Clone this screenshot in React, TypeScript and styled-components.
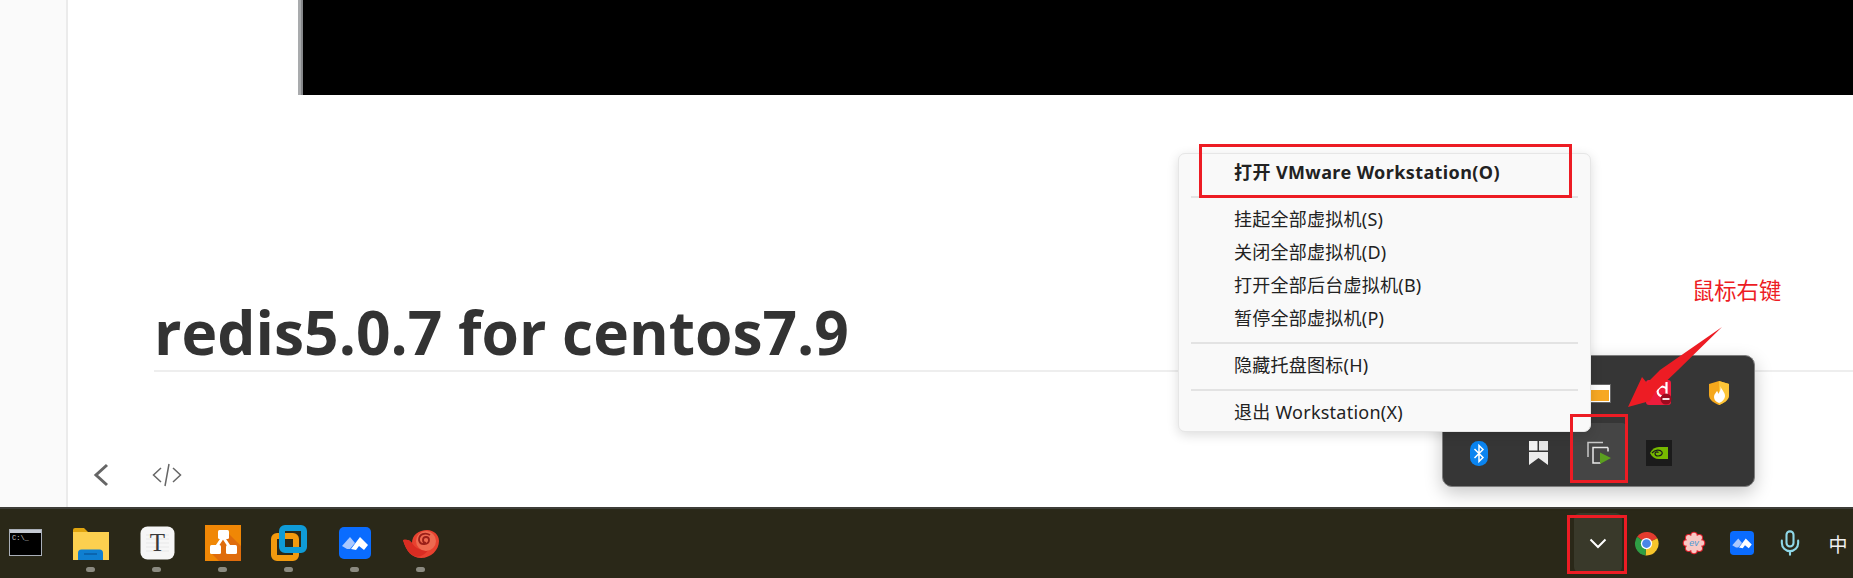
import React from "react";
import styled, { createGlobalStyle } from "styled-components";
import { Mic } from "lucide-react";

const GlobalStyle = createGlobalStyle`
  html, body {
    margin: 0;
    padding: 0;
    background: #fff;
    overflow: hidden;
  }
  * {
    box-sizing: border-box;
  }
`;

const Page = styled.div`
  position: relative;
  width: 1853px;
  height: 578px;
  overflow: hidden;
  display: flex;
  flex-direction: column;
  font-family: "Noto Sans", "Noto Sans CJK SC", sans-serif;
`;

const Workspace = styled.div`
  flex: 1;
  display: flex;
  min-height: 0;
`;

const Sidebar = styled.div`
  width: 68px;
  background: #fafafa;
  border-right: 2px solid #ebebeb;
`;

const Content = styled.div`
  flex: 1;
  min-width: 0;
  background: #fff;
`;

const ImageBand = styled.div`
  height: 95px;
  margin-left: 230px;
  background: #000;
  border-left: 3px solid #a9abad;
  box-shadow: inset 2px 0 0 #85878a;
`;

const TitleBlock = styled.div`
  margin: 191px 0 0 86px;
  border-bottom: 2px solid #eeeeee;
`;

const Title = styled.h1`
  margin: 0;
  height: 84px;
  font-family: "Open Sans", sans-serif;
  font-size: 60.5px;
  line-height: 91px;
  font-weight: 700;
  color: #333;
`;

const EditorTools = styled.div`
  display: flex;
  align-items: center;
  gap: 42px;
  margin: 90px 0 0 24px;
  color: #666;
`;

const Taskbar = styled.div`
  height: 71px;
  flex: none;
  display: flex;
  justify-content: space-between;
  background: #2a2818;
  border-top: 2px solid #3e3d38;
`;

const AppGroup = styled.div`
  display: flex;
  margin-left: -8px;
`;

const AppSlot = styled.div<{ $top: number }>`
  position: relative;
  width: 66px;
  height: 69px;
  display: flex;
  justify-content: center;
  padding-top: ${(p) => p.$top}px;
`;

const RunDot = styled.span`
  position: absolute;
  left: 28px;
  top: 58px;
  width: 9px;
  height: 5px;
  border-radius: 3px;
  background: #8b8a80;
`;

const TrayGroup = styled.div`
  display: flex;
  margin-right: -9px;
  padding-top: 4px;
`;

const TraySlot = styled.div<{ $active?: boolean }>`
  width: 48px;
  height: 60px;
  display: flex;
  align-items: center;
  justify-content: center;
  border-radius: 6px;
  color: #fff;
  background: ${(p) => (p.$active ? "#39392a" : "transparent")};
`;

const ImeLabel = styled.span`
  font-family: "Noto Sans CJK SC", sans-serif;
  font-size: 19px;
  color: #f0f0f0;
`;

const Flyout = styled.div`
  position: absolute;
  left: 1442px;
  top: 355px;
  width: 313px;
  height: 132px;
  padding: 7px 0 0 6px;
  display: grid;
  grid-template-columns: repeat(5, 60px);
  grid-auto-rows: 60px;
  background: #363636;
  border: 1px solid #7d7d7d;
  border-radius: 10px;
  box-shadow: 0 6px 18px rgba(0, 0, 0, 0.22);
`;

const FlyoutCell = styled.div<{ $active?: boolean }>`
  display: flex;
  align-items: center;
  justify-content: center;
  margin: 0 3px;
  border-radius: 4px;
  background: ${(p) => (p.$active ? "#454545" : "transparent")};
`;

const Menu = styled.div`
  position: absolute;
  left: 1178px;
  top: 153px;
  width: 413px;
  height: 279px;
  padding: 2px 12px 0;
  background: #f9f9f9;
  border: 1px solid #e6e6e6;
  border-radius: 7px;
  box-shadow: 0 3px 12px rgba(0, 0, 0, 0.14);
`;

const MenuItem = styled.div<{ $bold?: boolean }>`
  height: 33px;
  padding-left: 43px;
  font-size: 18px;
  line-height: 33px;
  white-space: nowrap;
  color: #222;
  letter-spacing: ${(p) => (p.$bold ? "0.4px" : "0.25px")};
  font-weight: ${(p) => (p.$bold ? 700 : 400)};
`;

const MenuRule = styled.div`
  height: 2px;
  margin: 7px 0 5px;
  background: #e3e3e3;
`;

const RedBox = styled.div<{
  $left: number;
  $top: number;
  $width: number;
  $height: number;
}>`
  position: absolute;
  left: ${(p) => p.$left}px;
  top: ${(p) => p.$top}px;
  width: ${(p) => p.$width}px;
  height: ${(p) => p.$height}px;
  border: 3px solid #ed1c24;
`;

const Note = styled.div`
  position: absolute;
  left: 1692px;
  top: 273px;
  font-family: "Noto Sans CJK SC", sans-serif;
  font-size: 22.3px;
  line-height: 32px;
  color: #ed1c24;
`;

const ArrowMark = styled.svg`
  position: absolute;
  left: 1620px;
  top: 320px;
`;

const CmdIcon = () => (
  <svg width="33" height="27" viewBox="0 0 33 27">
    <rect x="0.5" y="0.5" width="32" height="26" fill="#000" stroke="#a9afb8" />
    <rect x="1" y="1" width="31" height="3" fill="#c5cad2" />
    <text x="3" y="11" fontFamily="Liberation Mono" fontSize="7" fill="#c8c8c8">
      C:\_
    </text>
  </svg>
);

const FolderIcon = () => (
  <svg width="36" height="33" viewBox="0 0 36 33">
    <path d="M0 3a2 2 0 0 1 2-2h9l4 4H0z" fill="#e0a50f" />
    <path d="M0 5h36v28H0z" fill="#fcd04f" />
    <path d="M5 33v-7a3.500 3.500 0 0 1 3.500-3.500h18a3.500 3.500 0 0 1 3.500 3.500v7z" fill="#0f7fd1" />
    <path d="M11 27h13" stroke="#0a5da3" strokeWidth="1.500" />
  </svg>
);

const TyporaIcon = () => (
  <svg width="35" height="34" viewBox="0 0 35 34">
    <rect x="0.5" y="0.5" width="34" height="33" rx="7" fill="#f6f6f6" />
    <path d="M6 9h23M6 13h23M6 17h23M6 21h23M6 25h23" stroke="#e8e8e8" />
    <text
      x="17.5"
      y="25"
      textAnchor="middle"
      fontFamily="Liberation Serif"
      fontSize="25"
      fill="#3a3a3a"
    >
      T
    </text>
  </svg>
);

const DrawioIcon = () => (
  <svg width="36" height="36" viewBox="0 0 36 36">
    <rect width="36" height="36" fill="#f08705" />
    <path d="M23 8l13 13v15H14L5 27z" fill="#df6c0c" />
    <path d="M18 12l-8 12M18 12l8 12" stroke="#fff" strokeWidth="3" />
    <rect x="13" y="5" width="11" height="9" rx="1.5" fill="#fff" />
    <rect x="5" y="20" width="11" height="9" rx="1.5" fill="#fff" />
    <rect x="21" y="20" width="11" height="9" rx="1.5" fill="#fff" />
  </svg>
);

const VmwareIcon = () => (
  <svg width="36" height="36" viewBox="0 0 36 36">
    <rect x="3" y="11" width="22" height="22" rx="3" fill="none" stroke="#f29a0e" strokeWidth="6" />
    <rect x="11" y="3" width="22" height="22" rx="3" fill="none" stroke="#0f9bd7" strokeWidth="6" />
  </svg>
);

const MeetingIcon = ({ size }: { size: number }) => (
  <svg width={size} height={size} viewBox="0 0 32 32">
    <rect width="32" height="32" rx="5" fill="#0a6cff" />
    <path d="M3 19l8-9 5 6-5 6H8z" fill="#a9c8ff" />
    <path d="M12 22l9-12 8 8-4 5-5-4-3 4z" fill="#fff" />
  </svg>
);

const SnailIcon = () => (
  <svg width="36" height="28" viewBox="0 0 36 28">
    <path d="M0 10c4-1 7 0 9 3 0-8 7-13 15-13 7 0 12 5 12 11 0 9-8 17-18 17C9 28 3 21 0 10z" fill="#e8412f" />
    <path d="M0 10c4-1 7 0 9 3 3 5 9 8 16 7-3 5-9 8-14 6C6 24 3 19 0 10z" fill="#d92c22" />
    <circle cx="23" cy="11" r="10" fill="#ee6a50" />
    <path d="M23 13a3 3 0 1 1 3-3c0 5-9 6-10 0 0-6 6-8 11-5" fill="none" stroke="#9a1f18" strokeWidth="1.800" />
  </svg>
);

const ChevronIcon = () => (
  <svg width="18" height="11" viewBox="0 0 18 11">
    <path d="M1.5 1.5L9 9l7.5-7.5" fill="none" stroke="#fff" strokeWidth="2" />
  </svg>
);

const ChromeIcon = () => (
  <svg width="25" height="25" viewBox="0 0 24 24">
    <path d="M12 12L3 5.5A11.5 11.5 0 0 1 22.4 7z" fill="#e33b2e" />
    <path d="M12 12l10.4-5A11.5 11.5 0 0 1 11 23.5z" fill="#f7c52b" />
    <path d="M12 12l-1 11.5A11.5 11.5 0 0 1 3 5.5z" fill="#2f9e44" />
    <circle cx="12" cy="12" r="5.4" fill="#fff" />
    <circle cx="12" cy="12" r="4.2" fill="#4a86e8" />
  </svg>
);

const petals = [0, 45, 90, 135, 180, 225, 270, 315].map((deg) => ({
  x: 12 + 7.5 * Math.cos((deg * Math.PI) / 180),
  y: 12 + 7.5 * Math.sin((deg * Math.PI) / 180),
}));

const FlowerIcon = () => (
  <svg width="24" height="24" viewBox="0 0 24 24">
    {petals.map((p, i) => (
      <circle key={i} cx={p.x} cy={p.y} r="3.800" fill="#e0232e" />
    ))}
    {petals.map((p, i) => (
      <circle key={i} cx={p.x} cy={p.y} r="2.700" fill="#f9c8c4" />
    ))}
    <circle cx="12" cy="12" r="7.500" fill="#f9c8c4" />
    <text x="12" y="15" textAnchor="middle" fontFamily="Liberation Sans" fontStyle="italic" fontSize="9" fill="#4a9ad4">
      ev
    </text>
  </svg>
);

const BluetoothIcon = () => (
  <svg width="18" height="25" viewBox="0 0 18 25">
    <rect width="18" height="25" rx="8.500" fill="#0a84f0" />
    <path d="M4.500 8l8.500 8.500L9 20.500V4.500l4 4L4.500 17" fill="none" stroke="#fff" strokeWidth="1.500" />
  </svg>
);

const RibbonIcon = () => (
  <svg width="20" height="24" viewBox="0 0 20 24">
    <rect width="8.500" height="9.500" fill="#f2f2f2" />
    <rect x="10" width="9" height="9.500" fill="#e6e6e6" />
    <path d="M0 11h19v13l-9.500-7L0 24z" fill="#ececec" />
  </svg>
);

const VmTrayIcon = () => (
  <svg width="24" height="24" viewBox="0 0 24 24">
    <path d="M1 16V1.500h15" fill="none" stroke="#c8c8c8" strokeWidth="1.500" />
    <path d="M15 6.500H6V22h8" fill="none" stroke="#e8e8e8" strokeWidth="1.500" />
    <path d="M21 6.500h-6M21 6.500v4" fill="none" stroke="#e8e8e8" strokeWidth="1.500" />
    <path d="M13 11.500L24 17l-11 6z" fill="#5b9f1f" />
  </svg>
);

const NvidiaIcon = () => (
  <svg width="26" height="26" viewBox="0 0 26 26">
    <rect width="26" height="26" fill="#1b1b1b" />
    <path d="M13 7h9v12h-9c-4 0-7-2-9-6 2-4 5-6 9-6z" fill="#76b900" />
    <path d="M6 13c3-3.500 8-4 10-1 1 2-1 4-4 4-2 0-3-1-3-2.500s2-2 3.500-1" fill="none" stroke="#1b1b1b" strokeWidth="1.200" />
  </svg>
);

const WindowTrayIcon = () => (
  <svg width="24" height="19" viewBox="0 0 24 19">
    <rect x="0.500" y="0.500" width="23" height="18" fill="#fff" stroke="#666" />
    <rect x="2" y="6" width="20" height="11" fill="#f7a823" />
  </svg>
);

const RedAppIcon = () => (
  <svg width="26" height="26" viewBox="0 0 26 26">
    <rect width="25" height="25" rx="3" fill="#ee1c3c" />
    <path d="M20.500 2v12M20.500 9a4.800 4.800 0 1 0 0 5" fill="none" stroke="#fff" strokeWidth="2.200" />
    <circle cx="20" cy="19" r="5.500" fill="#9c0b1f" />
    <path d="M16.500 19h7" stroke="#fff" strokeWidth="1.800" />
  </svg>
);

const ShieldIcon = () => (
  <svg width="20" height="24" viewBox="0 0 20 24">
    <path d="M10 0l10 3v11c0 5-5 8-10 10C5 22 0 19 0 14V3z" fill="#f5a81c" />
    <path d="M10 0l10 3v11c0 5-5 8-10 10z" fill="#fdc538" />
    <path d="M11.500 5c1 4 4.500 6 4.500 10 0 3-3 6-6 7-3-1-5-3-5-6 0-3 2-4 3-6 1 1 1 2 1 3 2-2 3-5 2.500-8z" fill="#fff" />
  </svg>
);

const apps = [
  { icon: <CmdIcon />, top: 20, running: false },
  { icon: <FolderIcon />, top: 18, running: true },
  { icon: <TyporaIcon />, top: 17, running: true },
  { icon: <DrawioIcon />, top: 16, running: true },
  { icon: <VmwareIcon />, top: 16, running: true },
  { icon: <MeetingIcon size={32} />, top: 18, running: true },
  { icon: <SnailIcon />, top: 21, running: true },
];

const menuGroups = [
  ["挂起全部虚拟机(S)", "关闭全部虚拟机(D)", "打开全部后台虚拟机(B)", "暂停全部虚拟机(P)"],
  ["隐藏托盘图标(H)"],
  ["退出 Workstation(X)"],
];

export default function App() {
  return (
    <Page>
      <GlobalStyle />
      <Workspace>
        <Sidebar />
        <Content>
          <ImageBand />
          <TitleBlock>
            <Title>redis5.0.7 for centos7.9</Title>
          </TitleBlock>
          <EditorTools>
            <svg width="18" height="26" viewBox="0 0 18 26">
              <path d="M15 3L4 13l11 10" fill="none" stroke="#666" strokeWidth="3" />
            </svg>
            <svg width="30" height="24" viewBox="0 0 30 24">
              <path
                d="M9 5L1.500 12 9 19M21 5l7.500 7L21 19M17 1l-4 22"
                fill="none"
                stroke="#666"
                strokeWidth="1.500"
              />
            </svg>
          </EditorTools>
        </Content>
      </Workspace>

      <Taskbar>
        <AppGroup>
          {apps.map((app, index) => (
            <AppSlot key={index} $top={app.top}>
              {app.icon}
              {app.running && <RunDot />}
            </AppSlot>
          ))}
        </AppGroup>
        <TrayGroup>
          <TraySlot $active>
            <ChevronIcon />
          </TraySlot>
          <TraySlot>
            <ChromeIcon />
          </TraySlot>
          <TraySlot>
            <FlowerIcon />
          </TraySlot>
          <TraySlot>
            <MeetingIcon size={24} />
          </TraySlot>
          <TraySlot>
            <Mic size={28} color="#8fd8e8" strokeWidth={1.8} />
          </TraySlot>
          <TraySlot>
            <ImeLabel>中</ImeLabel>
          </TraySlot>
        </TrayGroup>
      </Taskbar>

      <Flyout>
        <FlyoutCell />
        <FlyoutCell />
        <FlyoutCell>
          <WindowTrayIcon />
        </FlyoutCell>
        <FlyoutCell>
          <RedAppIcon />
        </FlyoutCell>
        <FlyoutCell>
          <ShieldIcon />
        </FlyoutCell>
        <FlyoutCell>
          <BluetoothIcon />
        </FlyoutCell>
        <FlyoutCell>
          <RibbonIcon />
        </FlyoutCell>
        <FlyoutCell $active>
          <VmTrayIcon />
        </FlyoutCell>
        <FlyoutCell>
          <NvidiaIcon />
        </FlyoutCell>
      </Flyout>

      <Menu>
        <MenuItem $bold>打开 VMware Workstation(O)</MenuItem>
        <MenuRule />
        {menuGroups.map((group, groupIndex) => (
          <React.Fragment key={groupIndex}>
            {groupIndex > 0 && <MenuRule />}
            {group.map((label) => (
              <MenuItem key={label}>{label}</MenuItem>
            ))}
          </React.Fragment>
        ))}
      </Menu>

      <RedBox $left={1199} $top={144} $width={373} $height={54} />
      <RedBox $left={1570} $top={414} $width={58} $height={69} />
      <RedBox $left={1567} $top={515} $width={60} $height={59} />

      <Note>鼠标右键</Note>
      <ArrowMark width="110" height="95" viewBox="0 0 110 95">
        <polygon
          points="102,7 58,50 35,72 30,81 8,87 22,57 27,63 40,50"
          fill="#ed1c24"
        />
      </ArrowMark>
    </Page>
  );
}
